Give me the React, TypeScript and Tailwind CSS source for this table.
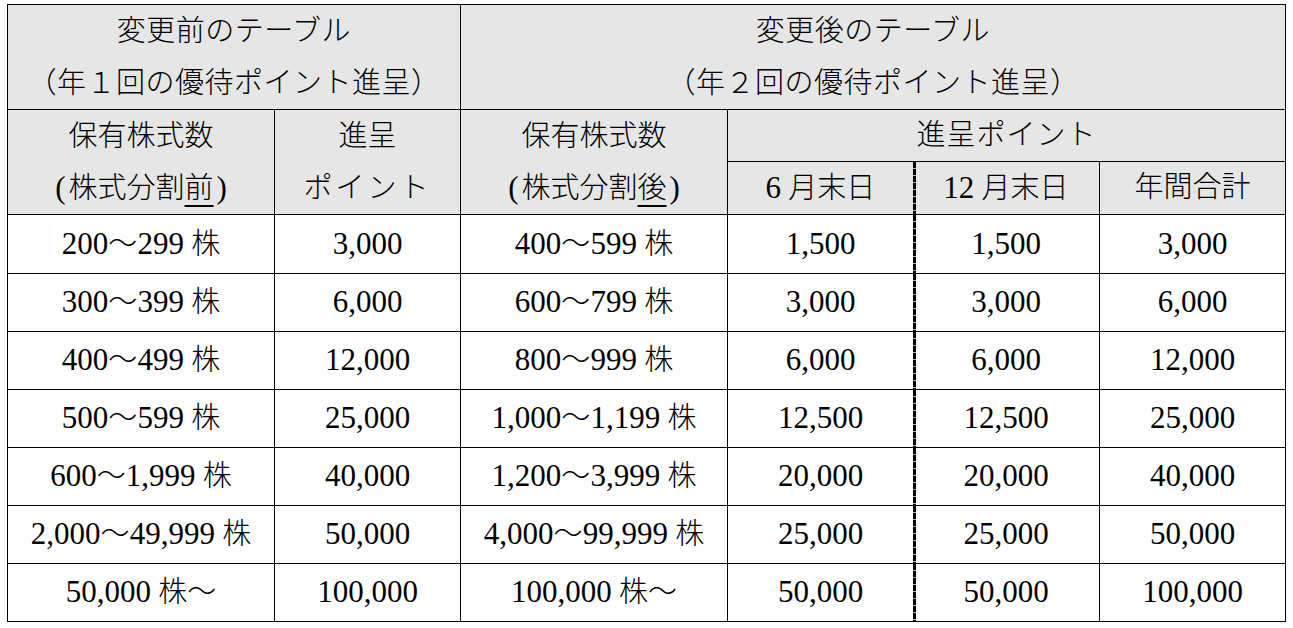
const rows: string[][] = [
  ["200～299 株", "3,000", "400～599 株", "1,500", "1,500", "3,000"],
  ["300～399 株", "6,000", "600～799 株", "3,000", "3,000", "6,000"],
  ["400～499 株", "12,000", "800～999 株", "6,000", "6,000", "12,000"],
  ["500～599 株", "25,000", "1,000～1,199 株", "12,500", "12,500", "25,000"],
  ["600～1,999 株", "40,000", "1,200～3,999 株", "20,000", "20,000", "40,000"],
  ["2,000～49,999 株", "50,000", "4,000～99,999 株", "25,000", "25,000", "50,000"],
  ["50,000 株～", "100,000", "100,000 株～", "50,000", "50,000", "100,000"],
]

const dashed =
  "bg-no-repeat [background-image:repeating-linear-gradient(to_bottom,#000_0px,#000_6px,#b0b0b0_6px,#b0b0b0_7px)] [background-size:3px_100%]"

export default function App() {
  return (
    <div className="w-[1293px] h-[628px] overflow-hidden bg-white pt-[4px] pl-[7px] text-black text-[29px] font-light [font-family:'Liberation_Serif','Noto_Sans_CJK_JP',serif]">
      <div className="grid w-max border-l border-t border-black grid-cols-[267px_186px_267px_185px_187px_186px] grid-rows-[105px_52px_53px_59px_58px_58px_58px_58px_58px_58px]">
        {/* top header */}
        <Head className="col-span-2 flex-col leading-[52px] tracking-[0.5px]">
          <span>変更前のテーブル</span>
          <span>（年１回の優待ポイント進呈）</span>
        </Head>
        <Head className="col-span-4 flex-col leading-[52px] tracking-[0.5px]">
          <span>変更後のテーブル</span>
          <span>（年２回の優待ポイント進呈）</span>
        </Head>

        {/* column headers */}
        <Head className="row-span-2 flex-col leading-[52px]">
          <span>保有株式数</span>
          <span>
            <span className="text-[31px] mr-[3px]">(</span>株式分割<span className="underline decoration-2 underline-offset-[7px]">前</span>
            <span className="text-[31px] ml-[3px]">)</span>
          </span>
        </Head>
        <Head className="row-span-2 flex-col leading-[52px]">
          <span>進呈</span>
          <span className="tracking-[3px]">ポイント</span>
        </Head>
        <Head className="row-span-2 flex-col leading-[52px]">
          <span>保有株式数</span>
          <span>
            <span className="text-[31px] mr-[3px]">(</span>株式分割<span className="underline decoration-2 underline-offset-[7px]">後</span>
            <span className="text-[31px] ml-[3px]">)</span>
          </span>
        </Head>
        <Head className="col-span-3">
          <span className="tracking-[1px]">進呈ポイント</span>
        </Head>
        <Head className="border-r-0">
          <span className="whitespace-pre">
            <Mixed text="6 月末日" />
          </span>
        </Head>
        <Head className={dashed}>
          <span className="whitespace-pre">
            <Mixed text="12 月末日" />
          </span>
        </Head>
        <Head>年間合計</Head>

        {rows.map((r, i) =>
          r.map((v, j) => (
            <Cell
              key={`${i}-${j}`}
              className={j === 3 ? "border-r-0" : j === 4 ? dashed : ""}
            >
              <Mixed text={v} />
            </Cell>
          ))
        )}
      </div>
    </div>
  )
}

function Head({ children, className = "" }: { children: React.ReactNode; className?: string }) {
  return (
    <div className={`flex items-center justify-center border-r border-b border-black bg-[#e6e6e6] ${className}`}>
      {children}
    </div>
  )
}

function Cell({ children, className = "" }: { children: React.ReactNode; className?: string }) {
  return (
    <div className={`flex items-center justify-center border-r border-b border-black bg-white ${className}`}>
      <span className="whitespace-pre">{children}</span>
    </div>
  )
}

// digits in the serif face a bit larger so they line up with the CJK width
function Mixed({ text }: { text: string }) {
  const parts = text.split(/([0-9,]+)/).filter(Boolean)
  return (
    <>
      {parts.map((p, i) =>
        /[0-9]/.test(p) ? (
          <span key={i} className="text-[31px]">
            {p}
          </span>
        ) : (
          <span key={i}>{p}</span>
        )
      )}
    </>
  )
}
